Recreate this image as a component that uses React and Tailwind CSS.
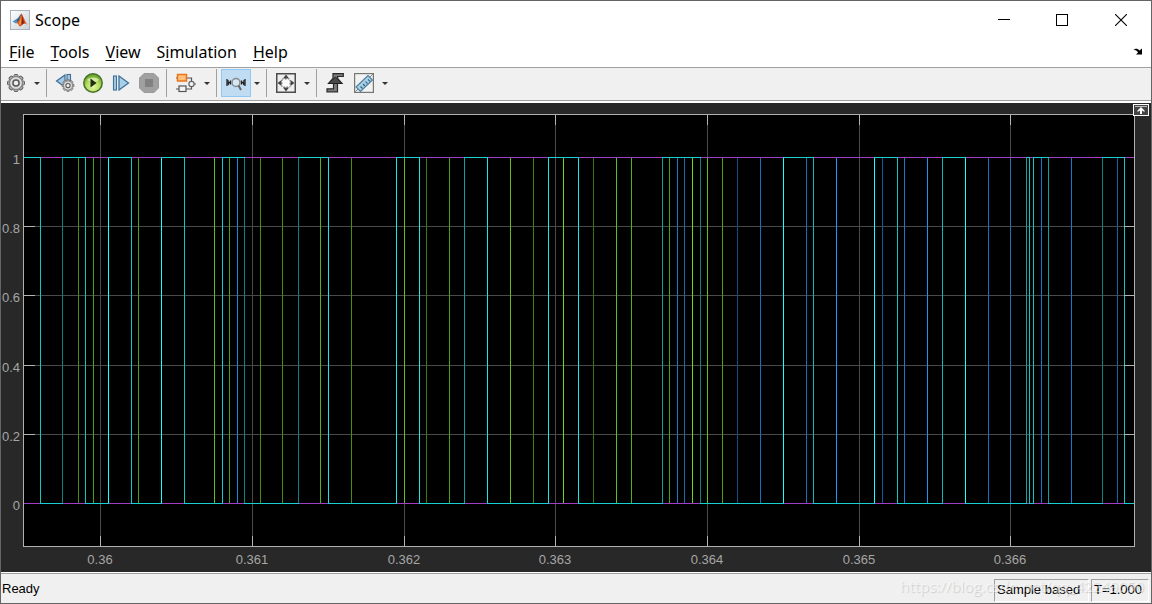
import React from 'react'


const PLOT_W = 1112
const PLOT_H = 433

// [x, colour] of every edge in the trace
const edges = [
    [17, "#12c4c4"], [39, "#0d8080"], [55, "#4a8c12"], [62, "#12c4b4"], [70, "#4fa012"],
    [85, "#1affff"], [108, "#12c4c4"], [115, "#4fa012"], [138, "#1affff"], [161, "#12c4c4"],
    [191, "#5fc018"], [199, "#12d0d0"], [206, "#4fa012"], [214, "#1a86e0"], [221, "#0d8080"],
    [237, "#4a8c12"], [259, "#4a8c12"], [275, "#0d8080"], [297, "#56b015"], [305, "#1ae6e6"],
    [328, "#4a8c12"], [373, "#1ae6e6"], [381, "#5fc018"], [396, "#1ae6e6"], [403, "#3c7a0a"],
    [426, "#4fa012"], [441, "#0fa0a0"], [464, "#1ae6e6"], [487, "#5fc018"], [510, "#438010"],
    [525, "#1ae6e6"], [540, "#6bd61c"], [555, "#1ae6e6"], [570, "#3c7010"], [593, "#5fc018"],
    [608, "#56b015"], [639, "#0fa0a0"], [646, "#4fa012"], [654, "#1a78d0"], [661, "#1668b4"],
    [669, "#6bd61c"], [677, "#0d8080"], [684, "#5fc018"], [699, "#4fa012"], [714, "#124e88"],
    [737, "#1670c0"], [760, "#1affff"], [783, "#1670c0"], [790, "#12b8b8"], [813, "#1a96ff"],
    [851, "#1affff"], [859, "#125aa0"], [874, "#12c4c4"], [881, "#1a78d0"], [904, "#1a96f0"],
    [919, "#12b8b8"], [942, "#1affff"], [965, "#1670c0"], [987, "#2470b0"], [1003, "#0fa0a0"],
    [1006, "#12c4c4"], [1010, "#12c4c4"], [1018, "#1a78d0"], [1025, "#0fa0a0"], [1048, "#1a78d0"],
    [1079, "#0d8080"], [1094, "#1262a8"], [1101, "#12c4c4"],
]

// [from, to] ranges where the signal is high
const highs = [
    [0, 17], [39, 62], [85, 108], [138, 161], [199, 221], [275, 305], [373, 396], [441, 464],
    [525, 555], [639, 677], [760, 790], [851, 874], [919, 942], [1003, 1006], [1010, 1025], [1079, 1101],
]

const xTicks = [
    { x: 77, label: "0.36" },
    { x: 229, label: "0.361" },
    { x: 381, label: "0.362" },
    { x: 532, label: "0.363" },
    { x: 684, label: "0.364" },
    { x: 836, label: "0.365" },
    { x: 987, label: "0.366" },
]

const yTicks = [
    { y: 43, label: "1" },
    { y: 112, label: "0.8" },
    { y: 181, label: "0.6" },
    { y: 251, label: "0.4" },
    { y: 320, label: "0.2" },
    { y: 389, label: "0" },
]

const menus = [
    ["", "F", "ile"],
    ["", "T", "ools"],
    ["", "V", "iew"],
    ["S", "i", "mulation"],
    ["", "H", "elp"],
]


const MatlabLogo = () => (
    <svg className="w-5 h-5" viewBox="0 0 20 20">
        <defs>
            <linearGradient id="logoBg" x1="0" y1="0" x2="1" y2="1">
                <stop offset="0" stopColor="#ffffff" />
                <stop offset="1" stopColor="#c9d2d8" />
            </linearGradient>
        </defs>
        <rect x="0.5" y="0.5" width="19" height="19" fill="url(#logoBg)" stroke="#a9b3b9" />
        <path d="M2.5 11.5 L6.5 9 L9 11 L6 13.5 Z" fill="#4a93bd" />
        <path d="M6.5 9 C8.5 8.5 9.5 5 11.5 3.5 L9.5 10.5 L7.5 12.5 Z" fill="#2b6390" />
        <path d="M11.5 3.5 C13.5 6 15 12 17.5 15 C15 13 13.5 13 12 15 C11 16.5 10 16.5 9 16 C8.5 14 7.5 13 6 13.5 C9 12 10 7 11.5 3.5 Z" fill="#d9531e" />
        <path d="M11.5 3.5 C12.5 7 13.5 11 14.5 13.2 C13 13.4 12.5 14.5 11.5 15.4 C12 11 11.8 7 11.5 3.5 Z" fill="#8c2415" />
        <path d="M11.3 5 C11.5 8 11.3 12 10.3 15.5 L8.7 13.4 C10 11 10.8 8 11.3 5 Z" fill="#f59b3c" />
    </svg>
)

const GearShape = () => (
    <g>
        {[0, 45, 90, 135, 180, 225, 270, 315].map((a) => (
            <rect key={a} x="8" y="1.5" width="4" height="4" rx="1" fill="#aaa" stroke="#666" strokeWidth="1" transform={`rotate(${a} 10 10)`} />
        ))}
        <circle cx="10" cy="10" r="6.4" fill="#c4c4c4" stroke="#777" strokeWidth="1" />
        <circle cx="10" cy="10" r="5" fill="none" stroke="#dedede" strokeWidth="1.4" />
        <circle cx="10" cy="10" r="3" fill="#f0f0f0" stroke="#5a5a5a" strokeWidth="1.5" />
    </g>
)

const GearIcon = () => (
    <svg className="w-5 h-5" viewBox="0 0 20 20"><GearShape /></svg>
)

const StepBackIcon = () => (
    <svg className="w-5 h-5" viewBox="0 0 20 20">
        <path d="M10 2 V14 L1.5 8 Z" fill="#a4c9e4" stroke="#3f6d94" strokeWidth="1.2" />
        <rect x="12" y="1.5" width="3.5" height="9" fill="#a4c9e4" stroke="#3f6d94" strokeWidth="1.1" />
        <g transform="translate(6 5.5) scale(0.7)"><GearShape /></g>
    </svg>
)

const PlayIcon = () => (
    <svg className="w-5 h-5" viewBox="0 0 20 20">
        <defs>
            <radialGradient id="playBg" cx="0.5" cy="0.7" r="0.6">
                <stop offset="0" stopColor="#e4f8a6" />
                <stop offset="0.6" stopColor="#b4dc5c" />
                <stop offset="1" stopColor="#6da62c" />
            </radialGradient>
        </defs>
        <circle cx="10" cy="10" r="9.2" fill="url(#playBg)" stroke="#47702a" strokeWidth="1.5" />
        <path d="M4 7 C5 3.5 15 3.5 16 7 C13 9 7 9 4 7 Z" fill="#f2fbd8" opacity="0.6" />
        <path d="M7.5 5.5 L13.5 10 L7.5 14.5 Z" fill="#222c14" />
    </svg>
)

const StepForwardIcon = () => (
    <svg className="w-5 h-5" viewBox="0 0 20 20">
        <rect x="2.5" y="3" width="3" height="14" fill="#a4c9e4" stroke="#3f7199" strokeWidth="1.1" />
        <path d="M8 3 L17.5 10 L8 17 Z" fill="#a9cfe9" stroke="#3f7199" strokeWidth="1.3" />
    </svg>
)

const StopIcon = () => (
    <svg className="w-5 h-5" viewBox="0 0 20 20">
        <path d="M5 0.5 H15 L19.5 5 V15 L15 19.5 H5 L0.5 15 V5 Z" fill="#a0a0a0" stroke="#9a9a9a" />
        <rect x="6" y="6" width="8" height="8" fill="#818181" />
    </svg>
)

const BlocksIcon = () => (
    <svg className="w-5 h-5" viewBox="0 0 20 20">
        <path d="M0 5 H15.5 V8.5 M0 16 H15.5 V13.5 M18 11 H20" fill="none" stroke="#555" strokeWidth="1.2" />
        <rect x="1.5" y="1.5" width="9" height="6.5" fill="#ffc07a" stroke="#e8741c" strokeWidth="1.5" />
        <rect x="3" y="13" width="7" height="5.5" fill="#f4f4f4" stroke="#555" strokeWidth="1.2" />
        <circle cx="15.5" cy="11" r="2.6" fill="#f4f4f4" stroke="#666" strokeWidth="1.2" />
    </svg>
)

const ZoomXIcon = () => (
    <svg className="w-5 h-5" viewBox="0 0 20 20">
        <path d="M1 6 V13 M19 6 V13" stroke="#222" strokeWidth="1.3" />
        <path d="M2 7 V12 L3 9.5 H5 M4.5 7.5 V11.5 M18 7 V12 L17 9.5 H15 M15.5 7.5 V11.5" fill="none" stroke="#222" strokeWidth="1.3" />
        <circle cx="10" cy="9.5" r="4" fill="#d6e7f4" stroke="#888" strokeWidth="1.5" />
        <path d="M12.5 12.5 L15 17" stroke="#666" strokeWidth="2" />
    </svg>
)

const FitIcon = () => (
    <svg className="w-5 h-5" viewBox="0 0 20 20">
        <rect x="0.75" y="0.75" width="18.5" height="18.5" fill="#eeeeee" stroke="#4c4c4c" strokeWidth="1.5" />
        <rect x="6" y="6" width="8" height="8" fill="#fafafa" stroke="#777" strokeDasharray="1.5 1.5" />
        <path d="M10 1.5 L13 5.5 H7 Z M10 18.5 L13 14.5 H7 Z M1.5 10 L5.5 7 V13 Z M18.5 10 L14.5 7 V13 Z" fill="#444" />
    </svg>
)

const TriggerIcon = () => (
    <svg className="w-5 h-5" viewBox="0 0 20 20">
        <path d="M8 0.7 H18.3 V3.5 H12.5 L13 6 L17 10.5 H12.5 V18.8 H2 V15.8 H8.5 V10.5 H3.5 L8 5.5 Z" fill="#7c7c7c" stroke="#2a2a2a" strokeWidth="1.2" />
        <path d="M10.5 4 L17 10.5 H3.5 Z" fill="#4a4a4a" stroke="#222" />
    </svg>
)

const RulerIcon = () => (
    <svg className="w-5 h-5" viewBox="0 0 20 20">
        <rect x="0.6" y="0.6" width="18.8" height="18.8" fill="#f2f2f2" stroke="#777" strokeWidth="1.2" />
        <path d="M1 19 L19 1" stroke="#888" />
        <path d="M2 14 L14 2.5 L18.5 7 L6.5 18.5 Z" fill="#a9d0e6" stroke="#4b7f9e" strokeWidth="1.1" />
        <path d="M8.5 15.5 L6.5 13.5 M11 13 L9 11 M13.5 10.7 L11.5 8.7 M16 8.3 L14 6.3" stroke="#31617f" strokeWidth="1.1" />
    </svg>
)

const Tool = ({ label, wide, active, children }) => (
    <button
        aria-label={label}
        className={`h-7 flex items-center justify-center border ${wide ? "w-[30px]" : "w-7"} ${active ? "bg-[#c0dcf3] border-[#90c8f6]" : "border-transparent"}`}
    >
        {children}
    </button>
)

const Caret = ({ label }) => (
    <button aria-label={label} className="w-3 h-7 flex items-center justify-center">
        <svg className="w-[6px] h-[3px]" viewBox="0 0 6 3"><path d="M0 0 H6 L3 3 Z" fill="#333" /></svg>
    </button>
)

const Separator = () => <div className="w-px h-7 bg-[#a0a0a0] ml-[3px] mr-1" />


const Plot = () => (
    <svg className="w-full h-full" viewBox={`0 0 ${PLOT_W} ${PLOT_H}`} preserveAspectRatio="none" shapeRendering="crispEdges">

        <rect width={PLOT_W} height={PLOT_H} fill="#000" />

        {xTicks.map(({ x }) => <rect key={x} x={x} y="0" width="1" height={PLOT_H} fill="#4a4a4a" />)}
        {yTicks.map(({ y }) => <rect key={y} x="0" y={y} width={PLOT_W} height="1" fill="#4a4a4a" />)}

        {edges.map(([x, fill]) => <rect key={x} x={x} y="43" width="1" height="347" fill={fill} />)}

        <rect x="0" y="43" width={PLOT_W} height="1" fill="#a040c8" />
        <rect x="0" y="389" width={PLOT_W} height="1" fill="#18d0d0" />
        {highs.map(([a, b]) => (
            <g key={a}>
                <rect x={a} y="43" width={b - a + 1} height="1" fill="#18d0d0" />
                <rect x={a + 1} y="389" width={b - a - 1} height="1" fill="#a040c8" />
            </g>
        ))}

        {xTicks.map(({ x }) => (
            <g key={x} fill="#b4b4b4">
                <rect x={x} y="0" width="1" height="11" />
                <rect x={x} y={PLOT_H - 11} width="1" height="11" />
            </g>
        ))}
        {yTicks.slice(1, 5).map(({ y }) => (
            <g key={y} fill="#b4b4b4">
                <rect x="0" y={y} width="12" height="1" />
                <rect x={PLOT_W - 11} y={y} width="11" height="1" />
            </g>
        ))}

        <path d={`M0 0 H${PLOT_W} V${PLOT_H} H0 Z M1 1 V${PLOT_H - 1} H${PLOT_W - 1} V1 Z`} fill="#b0b0b0" fillRule="evenodd" />

    </svg>
)


const App = () => {

    return (

        <div className="min-h-screen flex flex-col bg-white border border-[#646464] text-black font-['Noto_Sans','Open_Sans',sans-serif]">

            <header className="h-[37px] flex items-center pl-[9px]">
                <MatlabLogo />
                <h1 className="ml-[5px] text-base">Scope</h1>
                <div className="ml-auto h-full flex">
                    <button aria-label="Minimize" className="w-[58px] flex items-center justify-center">
                        <svg className="w-3 h-3" viewBox="0 0 12 12" shapeRendering="crispEdges"><path d="M0 5.5 H12" stroke="#000" /></svg>
                    </button>
                    <button aria-label="Maximize" className="w-[58px] flex items-center justify-center">
                        <svg className="w-3 h-3" viewBox="0 0 12 12" shapeRendering="crispEdges"><rect x="0.5" y="0.5" width="11" height="11" fill="none" stroke="#000" /></svg>
                    </button>
                    <button aria-label="Close" className="w-[60px] flex items-center justify-center">
                        <svg className="w-3 h-3" viewBox="0 0 12 12"><path d="M0 0 L12 12 M12 0 L0 12" stroke="#000" strokeWidth="1.1" /></svg>
                    </button>
                </div>
            </header>

            <nav className="h-[29px] flex items-center gap-4 px-2 pb-[2px]">
                {menus.map(([before, key, after]) => (
                    <button key={key} className="text-base">{before}<u className="underline-offset-2">{key}</u>{after}</button>
                ))}
                <button aria-label="Dock" className="ml-auto">
                    <svg className="w-[10px] h-[7px]" viewBox="0 0 9 7">
                        <path d="M0 1.5 C2 0 4.5 0.5 6 2.5 L8.5 0.5 V6.5 H2.5 L4.5 4.5 C3.5 2.5 2 2 0 1.5 Z" fill="#000" />
                    </svg>
                </button>
            </nav>

            <div className="h-[34px] flex items-center pb-[2px] bg-[#f0f0f0] border-y border-[#a0a0a0]">
                <Tool label="Configuration" wide><GearIcon /></Tool>
                <Caret label="Configuration options" />
                <Separator />
                <Tool label="Step back"><StepBackIcon /></Tool>
                <Tool label="Run"><PlayIcon /></Tool>
                <Tool label="Step forward"><StepForwardIcon /></Tool>
                <Tool label="Stop"><StopIcon /></Tool>
                <Separator />
                <Tool label="Highlight block" wide><BlocksIcon /></Tool>
                <Caret label="Highlight options" />
                <Separator />
                <Tool label="Zoom X" wide active><ZoomXIcon /></Tool>
                <Caret label="Zoom options" />
                <Separator />
                <Tool label="Scale axes" wide><FitIcon /></Tool>
                <Caret label="Scale options" />
                <Separator />
                <Tool label="Triggers"><TriggerIcon /></Tool>
                <Tool label="Measurements" wide><RulerIcon /></Tool>
                <Caret label="Measurement options" />
            </div>

            <main className="relative flex-1 mt-[2px] pt-[11px] pr-4 grid grid-cols-[22px_minmax(0,1fr)] grid-rows-[minmax(433px,1fr)_25px] bg-[#282828] text-[13px] leading-4 text-[#a6a6a6] font-['Liberation_Sans',Arial,sans-serif]">

                <div className="relative">
                    {yTicks.map(({ y, label }) => (
                        <span key={label} className="absolute right-[3px] -translate-y-[5px]" style={{ top: `${(y / PLOT_H) * 100}%` }}>{label}</span>
                    ))}
                </div>

                <Plot />

                <div className="relative col-start-2">
                    {xTicks.map(({ x, label }) => (
                        <span key={label} className="absolute top-[5px] -translate-x-1/2" style={{ left: `${(x / PLOT_W) * 100}%` }}>{label}</span>
                    ))}
                </div>

                <button aria-label="Maximize axes" className="absolute top-px right-[2px]">
                    <svg className="w-4 h-3" viewBox="0 0 16 12">
                        <rect x="0.5" y="0.5" width="15" height="11" fill="#444" stroke="#fff" />
                        <path d="M2 2.5 H14" stroke="#bbb" />
                        <path d="M8 3 L11.5 6.5 V8 L9 6.5 V10 H7 V6.5 L4.5 8 V6.5 Z" fill="#fff" />
                    </svg>
                </button>

            </main>

            <footer className="relative h-[31px] flex items-center pr-[2px] pt-[2px] bg-[#f0f0f0] border-t border-white text-[13px] leading-4 font-['Liberation_Sans',Arial,sans-serif]">
                <div className="absolute inset-x-0 top-0 h-px bg-[#a0a0a0]" />
                <p className="pl-px">Ready</p>
                <div className="ml-auto mt-[2px] flex gap-[2px]">
                    <p className="h-[23px] w-[95px] px-[2px] pt-[2px] border border-t-[#a0a0a0] border-l-[#a0a0a0] border-r-white border-b-white">Sample based</p>
                    <p className="h-[23px] w-[58px] px-[2px] pt-[2px] border border-t-[#a0a0a0] border-l-[#a0a0a0] border-r-white border-b-white">T=1.000</p>
                </div>
                <p className="absolute right-[7px] top-px text-[15px] leading-6 text-white/50 [text-shadow:1px_1px_1px_rgba(0,0,0,0.14)] pointer-events-none font-['Open_Sans',sans-serif]">https://blog.csdn.net/qq_42249050</p>
            </footer>

        </div>

    )

}


export default App
